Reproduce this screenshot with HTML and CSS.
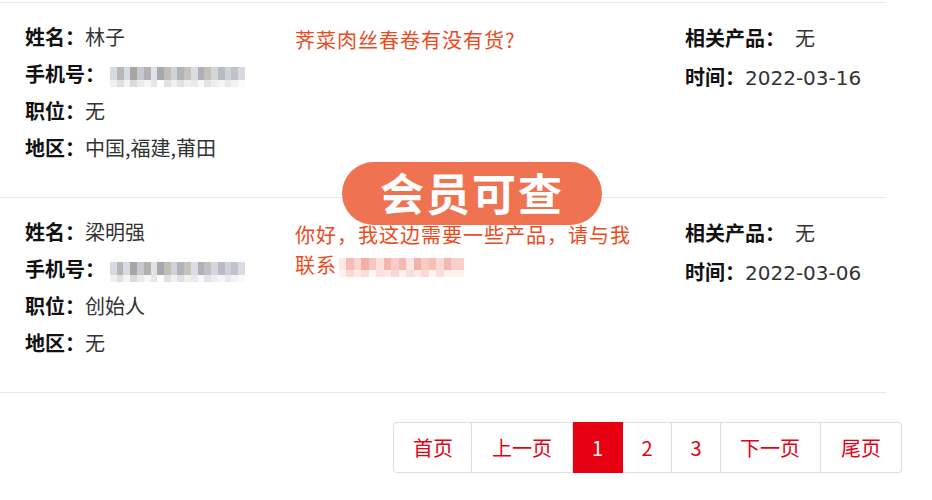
FILE: index.html
```html
<!doctype html>
<html lang="zh-CN">
<head>
<meta charset="utf-8">
<title>询盘列表</title>
<meta name="viewport" content="width=device-width, initial-scale=1">
<link rel="stylesheet" href="styles.css">
</head>
<body>
<div class="wrap">
<div class="list">
<div class="item">
<div class="info">
<p><b>姓名：</b><span>林子</span></p>
<p><b>手机号：</b><span class="mosaic gray"></span></p>
<p><b>职位：</b><span>无</span></p>
<p><b>地区：</b><span>中国,福建,莆田</span></p>
</div>
<div class="msg">荠菜肉丝春卷有没有货?</div>
<div class="meta">
<p><b>相关产品：</b><span class="wide">无</span></p>
<p><b>时间：</b><span class="date">2022-03-16</span></p>
</div>
</div>
<div class="item">
<div class="info">
<p><b>姓名：</b><span>梁明强</span></p>
<p><b>手机号：</b><span class="mosaic gray alt"></span></p>
<p><b>职位：</b><span>创始人</span></p>
<p><b>地区：</b><span>无</span></p>
</div>
<div class="msg">你好，我这边需要一些产品，请与我联系<span class="mosaic pink"></span></div>
<div class="meta">
<p><b>相关产品：</b><span class="wide">无</span></p>
<p><b>时间：</b><span class="date">2022-03-06</span></p>
</div>
</div>
<div class="badge">会员可查</div>
</div>
<div class="pager">
<a href="#" class="first">首页</a>
<a href="#" class="prev">上一页</a>
<a href="#" class="on">1</a>
<a href="#" class="num">2</a>
<a href="#" class="num">3</a>
<a href="#" class="next">下一页</a>
<a href="#" class="last">尾页</a>
</div>
</div>
</body>
</html>
```
FILE: styles.css
```css
* { box-sizing:border-box; margin:0; padding:0; }
body { font-family:"Noto Sans CJK SC", "Noto Sans", sans-serif; font-size:20px; color:#333; background:#fff; }
.wrap { width:902px; padding-top:2px; }
.list { position:relative; width:886px; border-bottom:1px solid #e8e8e8; }
.item { display:flex; border-top:1px solid #e8e8e8; padding:15px 0 0 25px; height:195px; }
.info { width:270px; }
.info p { line-height:37px; white-space:nowrap; }
b { font-weight:700; color:#111; }
.wide { margin-left:10px; }
.date { font-family:"DejaVu Sans", sans-serif; font-size:20px; }
.msg { width:345px; margin-top:7px; margin-right:45px; line-height:30px; letter-spacing:1px; color:#ec4a1c; }
.meta p { line-height:39px; white-space:nowrap; }
.mosaic { display:inline-block; vertical-align:middle; height:20px; margin-left:5px; background-repeat:no-repeat; }
.gray { width:135px; background-size:100% 13px, 100% 7px; background-position:0 0, 0 13px; background-image:
	linear-gradient(90deg, #d4dbe2 0 5%, #b9b6b3 5% 10%, #d6dce3 10% 15%, #a8a5a3 15% 20%, #c4c9cf 20% 25%, #b4b1ae 25% 30%, #dfe4e9 30% 35%, #a6a9af 35% 40%, #c2bdb8 40% 45%, #cfd3d8 45% 50%, #b0b4ba 50% 55%, #c8c3be 55% 60%, #dadee3 60% 65%, #adb1b7 65% 70%, #c5c0bc 70% 75%, #d3d7dc 75% 80%, #b8bcc2 80% 85%, #cdd2d7 85% 90%, #bfc3c8 90% 95%, #d7dbe0 95% 100%),
	linear-gradient(90deg, #eef0f2 0 5%, #e2e0de 5% 10%, #f3f4f6 10% 15%, #dcdad8 15% 20%, #e9ebee 20% 25%, #f6f6f6 25% 30%, #e3e6ea 30% 35%, #ffffff 35% 40%, #e4e1de 40% 45%, #eff1f3 45% 50%, #dde0e4 50% 55%, #f2f0ee 55% 60%, #e6e9ec 60% 65%, #f8f8f8 65% 70%, #e1e3e6 70% 75%, #eceef0 75% 80%, #f4f5f6 80% 85%, #e7e9ec 85% 90%, #f1f2f4 90% 95%, #fafafa 95% 100%); }
.gray.alt { filter:hue-rotate(10deg); }
.pink { width:125px; height:19px; margin-left:2px; letter-spacing:0; background-size:100% 12px, 100% 7px; background-position:0 0, 0 12px; background-image:
	linear-gradient(90deg, #fde9e7 0 6%, #f5bcb4 6% 12%, #fbd5cf 12% 18%, #f2b0a7 18% 24%, #f7c6be 24% 30%, #fbe0dc 30% 36%, #f3b6ad 36% 42%, #f9cdc6 42% 48%, #f4bab2 48% 54%, #fce4e0 54% 60%, #f2b2a9 60% 66%, #f8cbc3 66% 72%, #f5beb6 72% 78%, #fbdad5 78% 84%, #f3b7ae 84% 90%, #f8cfc9 90% 100%),
	linear-gradient(90deg, #fff3f2 0 6%, #fbd9d4 6% 12%, #fde8e5 12% 18%, #fbdcd7 18% 24%, #fff6f5 24% 30%, #fcdfda 30% 36%, #fde9e6 36% 42%, #fad6d0 42% 48%, #fff1ef 48% 54%, #fcdfdb 54% 60%, #fdeae7 60% 66%, #fbd8d3 66% 72%, #fff4f2 72% 78%, #fcdcd7 78% 84%, #fef0ee 84% 100%); }
.badge { position:absolute; left:342px; top:160px; width:260px; height:63px; border-radius:32px; background:#ef7350; color:#fff; font-size:44px; font-weight:700; letter-spacing:2px; text-align:center; line-height:61px; }
.pager { display:flex; justify-content:flex-end; margin-top:29px; }
.pager a { display:block; height:51px; line-height:49px; padding:0 20px; font-size:20px; color:#e60012; text-decoration:none; border:1px solid #ddd; border-left:none; }
.pager a.first { border-left:1px solid #ddd; border-radius:4px 0 0 4px; padding:0 18px 0 19px; }
.pager a.next { padding:0 20px 0 19px; }
.pager a.last { border-radius:0 4px 4px 0; }
.pager a.num { width:49px; padding:0; text-align:center; }
.pager a.on { background:#e60012; color:#fff; border-color:#e60012; width:50px; text-align:center; padding:0; }
```
